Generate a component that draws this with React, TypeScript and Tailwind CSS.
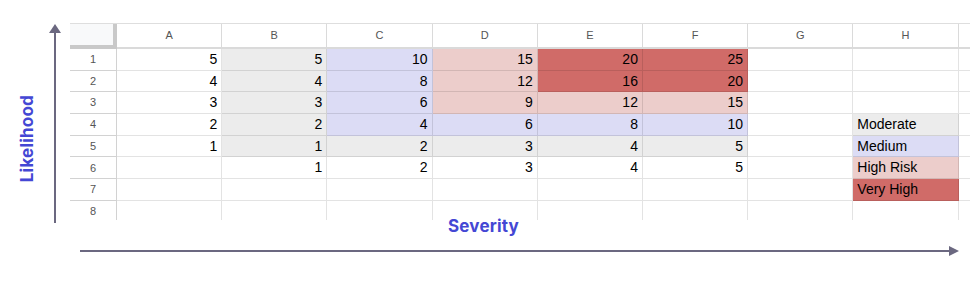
import React from 'react';

type Tone = 'none' | 'gray' | 'lav' | 'pink' | 'red';

const toneClass: Record<Tone, string> = {
  none: 'bg-white',
  gray: 'bg-[#ececec]',
  lav: 'bg-[#dcdcf5]',
  pink: 'bg-[#eccdcb]',
  red: 'bg-[#d06b68]',
};

// [value, tone] for columns A..F of each row
const rows: [string, Tone][][] = [
  [['5', 'none'], ['5', 'gray'], ['10', 'lav'], ['15', 'pink'], ['20', 'red'], ['25', 'red']],
  [['4', 'none'], ['4', 'gray'], ['8', 'lav'], ['12', 'pink'], ['16', 'red'], ['20', 'red']],
  [['3', 'none'], ['3', 'gray'], ['6', 'lav'], ['9', 'pink'], ['12', 'pink'], ['15', 'pink']],
  [['2', 'none'], ['2', 'gray'], ['4', 'lav'], ['6', 'lav'], ['8', 'lav'], ['10', 'lav']],
  [['1', 'none'], ['1', 'gray'], ['2', 'gray'], ['3', 'gray'], ['4', 'gray'], ['5', 'gray']],
  [['', 'none'], ['1', 'none'], ['2', 'none'], ['3', 'none'], ['4', 'none'], ['5', 'none']],
  [['', 'none'], ['', 'none'], ['', 'none'], ['', 'none'], ['', 'none'], ['', 'none']],
  [['', 'none'], ['', 'none'], ['', 'none'], ['', 'none'], ['', 'none'], ['', 'none']],
];

// legend in column H, indexed by row
const legend: Record<number, [string, Tone]> = {
  3: ['Moderate', 'gray'],
  4: ['Medium', 'lav'],
  5: ['High Risk', 'pink'],
  6: ['Very High', 'red'],
};

const cols = ['A', 'B', 'C', 'D', 'E', 'F', 'G', 'H', ''];

const cell = 'border-r border-b border-[#0000001c] text-[14px] text-black';

function Sheet() {
  return (
    <div className="w-[900px] h-[197px] overflow-hidden border-t border-[#dedede]">
      <div className="grid grid-cols-[47px_repeat(8,105.2px)_105px] grid-rows-[25px_repeat(8,21.7px)] font-['Liberation_Sans',Arial,sans-serif]">
        <div className="bg-[#f8f9fa] border-r-4 border-b-4 border-[#c9c9c9]" />
        {cols.map((c, i) => (
          <div
            key={i}
            className="flex items-center justify-center border-r border-b-2 border-[#dadada] text-[11px] text-[#555]"
          >
            {c}
          </div>
        ))}
        {rows.map((r, ri) => (
          <React.Fragment key={ri}>
            <div className="flex items-center justify-center border-r border-b border-[#d2d2d2] text-[11px] text-[#555]">
              {ri + 1}
            </div>
            {r.map(([v, t], ci) => (
              <div key={ci} className={`${cell} ${toneClass[t]} flex items-center justify-end pr-[4px]`}>
                {v}
              </div>
            ))}
            <div className={`${cell} bg-white`} />
            {legend[ri] ? (
              <div className={`${cell} ${toneClass[legend[ri][1]]} flex items-center pl-[4px]`}>
                {legend[ri][0]}
              </div>
            ) : (
              <div className={`${cell} bg-white`} />
            )}
            <div className={`${cell} bg-white`} />
          </React.Fragment>
        ))}
      </div>
    </div>
  );
}

export default function App() {
  return (
    <div className="w-[970px] h-[295px] bg-white overflow-hidden font-['Inter',sans-serif]">
      <div className="flex pt-[23px]">
        {/* y axis */}
        <div className="w-[49px] pl-[4px] pt-[72px] flex items-start justify-center">
          <span className="[writing-mode:vertical-rl] rotate-180 text-[17px] leading-[20px] font-bold text-[#4447d4] tracking-[0.2px]">
            Likelihood
          </span>
        </div>
        <svg width="12" height="200" viewBox="0 0 12 200" className="shrink-0">
          <line x1="6" y1="8" x2="6" y2="200" stroke="#6b6880" strokeWidth="2" />
          <polygon points="0,10 6,1 12,10" fill="#6b6880" />
        </svg>
        <div className="ml-[9px]">
          <Sheet />
        </div>
      </div>

      <div className="-mt-[7px] flex justify-center pr-[3px]">
        <span className="text-[17px] leading-[20px] font-bold text-[#4447d4] tracking-[0.2px]">Severity</span>
      </div>

      <svg width="880" height="12" viewBox="0 0 880 12" className="ml-[80px] mt-[9px] block">
        <line x1="0" y1="6" x2="872" y2="6" stroke="#6b6880" strokeWidth="2" />
        <polygon points="869,1 879,6 869,11" fill="#6b6880" />
      </svg>
    </div>
  );
}
